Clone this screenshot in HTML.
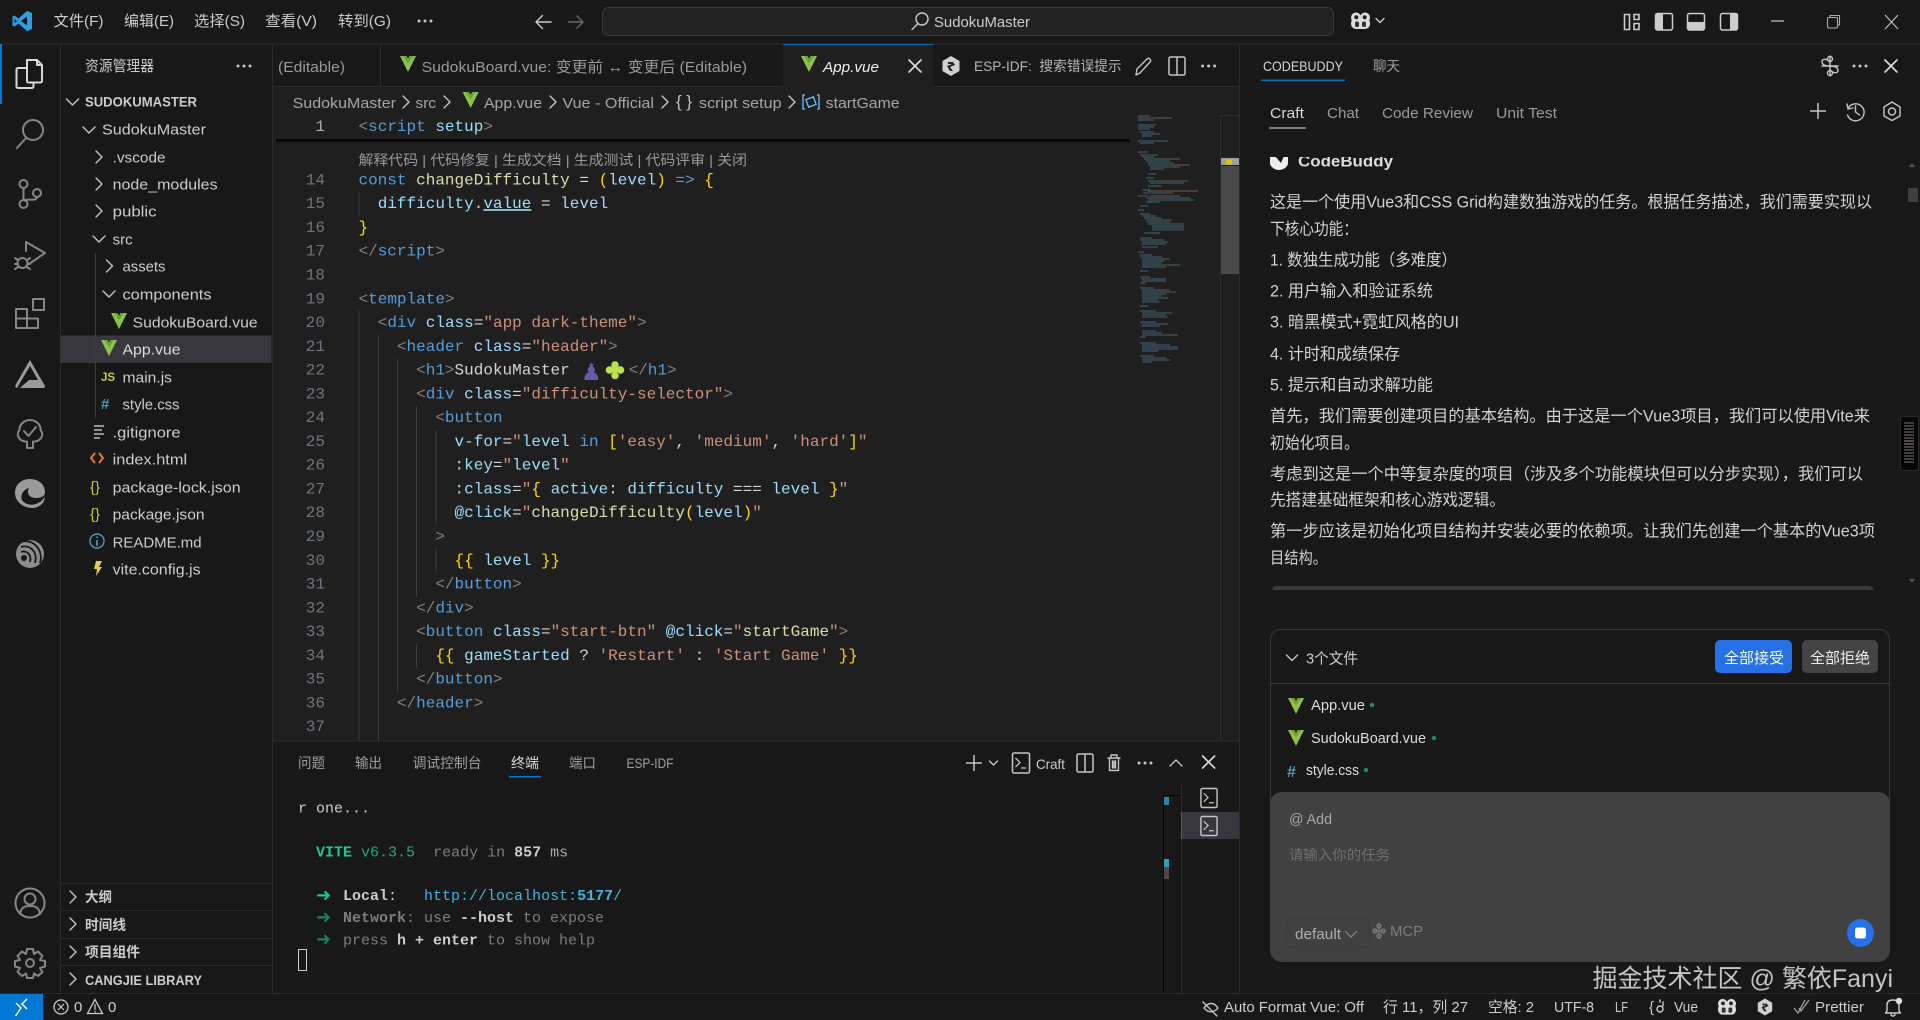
<!DOCTYPE html>
<html lang="zh"><head><meta charset="utf-8"><title>SudokuMaster</title>
<style>
html,body{margin:0;padding:0;background:#181818;overflow:hidden}
svg{display:block}
text{font-family:"Liberation Sans","Noto Sans CJK SC",sans-serif;fill:#ccc;font-size:15px;white-space:pre}
.m{font-family:"Liberation Mono","Noto Sans CJK SC",monospace;font-size:16px}
.t{font-family:"Liberation Mono","Noto Sans CJK SC",monospace;font-size:15px}
.n{font-family:"Liberation Mono",monospace;font-size:16px;fill:#6e7681;text-anchor:end}
.b{fill:#808080}.g{fill:#569cd6}.a{fill:#9cdcfe}.s{fill:#ce9178}.y{fill:#ffd700}.f{fill:#dcdcaa}.w{fill:#d4d4d4}.p{fill:#da70d6}
.i{fill:none;stroke:#868686;stroke-width:2;stroke-linecap:round;stroke-linejoin:round}
.k{fill:none;stroke:#ccc;stroke-width:1.4;stroke-linecap:round;stroke-linejoin:round}
.c{fill:none;stroke:#c5c5c5;stroke-width:1.4;stroke-linecap:round;stroke-linejoin:round}
.d{font-size:16.2px;fill:#d2d2d2}
.e{font-size:15px;fill:#ccc;transform:translateY(-.6px)}
.h{font-size:14px;font-weight:700;fill:#ccc}
.ar{font-family:"DejaVu Sans",sans-serif;font-size:18px;font-weight:700}
</style></head><body>
<svg xmlns="http://www.w3.org/2000/svg" width="1920" height="1020" viewBox="0 0 1920 1020">
<defs>
<g id="vue"><path d="M-8-8-0 8 8-8H4.600L0-1.300-4.600-8Z" fill="#8dc149"/><path d="M-4.600-8H-1.600L0-5.400 1.600-8H4.600L0-1.300Z" fill="#6aa83a"/></g>
<g id="chr"><path d="M-3-6 3 0-3 6" class="c" fill="none"/></g>
<g id="chd"><path d="M-6-3 0 3 6-3" class="c" fill="none"/></g>
<g id="term"><rect x="-8.5" y="-10" width="17" height="20" rx="1.5" fill="none" stroke="#c5c5c5" stroke-width="1.5"/><path d="M-5.5-5 -1 -.5-5.5 4M0 5H5" fill="none" stroke="#c5c5c5" stroke-width="1.3"/></g>
<g id="split"><rect x="-8" y="-9" width="16" height="18" rx="1.5" fill="none" stroke="#c5c5c5" stroke-width="1.5"/><path d="M0-9V9" stroke="#c5c5c5" stroke-width="1.5"/></g>
<g id="dots"><circle cx="-6" r="1.5" fill="#c5c5c5"/><circle r="1.5" fill="#c5c5c5"/><circle cx="6" r="1.5" fill="#c5c5c5"/></g>
<g id="x"><path d="M-6-6 6 6M6-6-6 6" fill="none" stroke="#ddd" stroke-width="1.6" stroke-linecap="round"/></g>
<g id="cop"><circle cx="-4.500" cy="-3.500" r="5" fill="#ddd"/><circle cx="4.500" cy="-3.500" r="5" fill="#ddd"/><rect x="-9.500" y="-3" width="19" height="11" rx="5" fill="#ddd"/><circle cx="-4.200" cy="-3.800" r="2" fill="#222"/><circle cx="4.200" cy="-3.800" r="2" fill="#222"/><rect x="-5.500" y="0.500" width="4" height="5.500" rx="1.500" fill="#333"/><rect x="1.500" y="0.500" width="4" height="5.500" rx="1.500" fill="#333"/></g>
<g id="hex"><path d="M0-10 8.5-5V5L0 10-8.5 5V-5Z" fill="#cfcfcf"/><path d="M-3-4H2L4-1-1 1 2 5H-1L-4 0 1-2-3-2Z" fill="#222"/></g>
<clipPath id="cb"><rect x="1262" y="157" width="300" height="20"/></clipPath>
</defs>

<!-- surfaces -->
<rect width="1920" height="1020" fill="#181818"/>
<rect x="272" y="87" width="967" height="654" fill="#1f1f1f"/>
<rect x="0" y="43.5" width="1920" height="1" fill="#2b2b2b"/>
<rect x="60" y="44" width="1" height="949" fill="#2b2b2b"/>
<rect x="272" y="44" width="1" height="949" fill="#2b2b2b"/>
<rect x="1239" y="44" width="1" height="949" fill="#2b2b2b"/>
<rect x="273" y="86" width="966" height="1" fill="#2b2b2b"/>
<rect x="273" y="740.5" width="966" height="1" fill="#2b2b2b"/>
<rect y="993" width="1920" height="1" fill="#2b2b2b"/>

<!-- title bar -->
<path d="M27 11 18.500 18.500 14.500 15.500 12.500 16.400V25.600L14.500 26.500 18.500 23.500 27 31 32 29V13ZM27 16.500V25.500L21 21ZM14.500 18.800 17 21 14.500 23.200Z" fill="#2d9fe8"/>
<text x="53.500" y="26" textLength="50" lengthAdjust="spacingAndGlyphs" font-size="14.500">文件(F)</text>
<text x="124" y="26" textLength="50" lengthAdjust="spacingAndGlyphs">编辑(E)</text>
<text x="194" y="26" textLength="51" lengthAdjust="spacingAndGlyphs">选择(S)</text>
<text x="265" y="26" textLength="52" lengthAdjust="spacingAndGlyphs">查看(V)</text>
<text x="338" y="26" textLength="53" lengthAdjust="spacingAndGlyphs">转到(G)</text>
<use href="#dots" x="425" y="21"/>
<path d="M551 22H536M542.500 15.500 536 22 542.500 28.500" class="k"/>
<path d="M568 22H583M576.500 15.500 583 22 576.500 28.500" fill="none" stroke="#6a6a6a" stroke-width="1.400"/>
<rect x="602.500" y="7.500" width="731" height="28" rx="6" fill="#222" stroke="#3a3a3a"/>
<circle cx="922" cy="19" r="6" class="k"/><path d="M917.500 24 912 29.500" class="k"/>
<text x="934" y="27" textLength="96" lengthAdjust="spacingAndGlyphs">SudokuMaster</text>
<use href="#cop" x="1360.500" y="21"/>
<path d="M1376 18.500 1380 22.500 1384 18.500" class="k" stroke-width="1.100"/>
<path d="M1624.500 14.500h5v15h-5zM1634 14.500h5v5h-5zM1634 23.500h5v6h-5z" fill="none" stroke="#ccc" stroke-width="1.600"/>
<rect x="1655.500" y="13.500" width="17" height="16.500" rx="2" fill="none" stroke="#ccc" stroke-width="1.500"/><path d="M1655.500 15.500a2 2 0 0 1 2-2H1663V30h-5.500a2 2 0 0 1-2-2z" fill="#ccc"/>
<rect x="1687.500" y="13.500" width="17" height="16.500" rx="2" fill="none" stroke="#ccc" stroke-width="1.500"/><path d="M1687.500 22H1704.500V28a2 2 0 0 1-2 2H1689.500a2 2 0 0 1-2-2z" fill="#ccc"/>
<rect x="1720.500" y="13.500" width="17" height="16.500" rx="2" fill="none" stroke="#ccc" stroke-width="1.500"/><path d="M1737.500 15.500a2 2 0 0 0-2-2H1730V30h5.500a2 2 0 0 0 2-2z" fill="#ccc"/>
<path d="M1771 21H1784" stroke="#ccc" stroke-width="1.200"/>
<rect x="1827.500" y="17.500" width="10" height="10.500" rx="1.500" fill="none" stroke="#aaa" stroke-width="1.100"/><path d="M1830 17V15.500H1839.500V25H1837.500" fill="none" stroke="#aaa" stroke-width="1.100"/>
<path d="M1885 15 1898 29M1898 15 1885 29" stroke="#ccc" stroke-width="1"/>

<!-- activity bar -->
<rect x="0" y="44" width="2" height="60" fill="#0078d4"/>
<g fill="none" stroke="#d7d7d7" stroke-width="2" stroke-linejoin="round"><path d="M27 60H37L42 65V81A1.500 1.500 0 0 1 40.500 82.500H28.500A1.500 1.500 0 0 1 27 81ZM37 60V65H42"/><path d="M27 68H18A1.500 1.500 0 0 0 16.500 69.500V86.500A1.500 1.500 0 0 0 18 88H32A1.500 1.500 0 0 0 33.500 86.500V82.500"/></g>
<g class="i"><circle cx="33" cy="130" r="10"/><path d="M26 138 17 148"/></g>
<g class="i"><circle cx="23.500" cy="184" r="4"/><circle cx="23.500" cy="204" r="4"/><circle cx="37" cy="193" r="4"/><path d="M23.500 188V200M37 197C37 202 27 198 24.500 200.500"/></g>
<g class="i"><path d="M26 242 45 253 29 264M26 242V251"/><circle cx="22.500" cy="263" r="5"/><path d="M15 258 18 260M15 264H18M15 269 18 267M30 258 27 260M30 264H27M30 269 27 267"/></g>
<g class="i"><path d="M16 309H27V328H16ZM16 318.500H38V328H27M27 318.500V309"/><rect x="33" y="299" width="11" height="11"/></g>
<path d="M30 360 45 386C45 388 44 388 42 388H20L29 380H38L30 366 17 388C15 388 15 386 16 384Z" fill="#9a9a9a"/>
<g class="i"><path d="M30 420C36 420 41 425 40.500 430 43 433 43 437 39 440 36 442 33 441.500 33 441.500V448H27V441.500C27 441.500 24 442 21 440 17 437 17 433 19.500 430 19 425 24 420 30 420Z"/><path d="M24 431 28.500 436 36 427"/></g>
<path d="M45 496C45 504 38 508 32 508 24 508 15 502 15 493 15 484 22 479 30 479 39 479 45 485 45 492 45 497 40 498 36 498 30 498 26 494 29 488 23 490 20 495 22 500 25 505 33 506 38 503 41 502 44 499 45 496Z" fill="#9a9a9a"/>
<circle cx="30" cy="554" r="14" fill="#8d8d8d"/><g fill="none" stroke="#181818" stroke-width="1.800"><path d="M21 547C30 544 38 552 35 563"/><path d="M21 542C33 538 44 550 40 563"/><path d="M21 552C27 550 32 555 30 562"/></g><circle cx="24" cy="558" r="3" fill="#181818"/>
<g class="i"><circle cx="30" cy="903" r="14.500"/><circle cx="30" cy="899" r="5.500"/><path d="M20 914C21 907 25 906 30 906S39 907 40 914"/></g>
<g class="i"><circle cx="30" cy="963" r="4"/><path d="M27 949H33L34 954 38 951.500 42.500 956 40 960 45 961V966.500L40 968 42.500 972 38 976 34 973.500 33 978H27L26 973.500 22 976 17.500 972 20 968 15 966.500V961L20 960 17.500 956 22 951.500 26 954Z"/></g>

<!-- explorer -->
<text x="85" y="71" textLength="69" lengthAdjust="spacingAndGlyphs" font-size="14">资源管理器</text>
<use href="#dots" x="244" y="66"/>
<use href="#chd" x="72.500" y="102"/>
<text class="h" x="85" y="106.500" textLength="112" lengthAdjust="spacingAndGlyphs">SUDOKUMASTER</text>
<use href="#chd" x="89" y="130"/>
<text class="e" x="102" y="135" textLength="104" lengthAdjust="spacingAndGlyphs">SudokuMaster</text>
<use href="#chr" x="99" y="157"/><text class="e" x="112.600" y="163" textLength="53" lengthAdjust="spacingAndGlyphs">.vscode</text>
<use href="#chr" x="99" y="184"/><text class="e" x="112.600" y="190" textLength="105" lengthAdjust="spacingAndGlyphs">node_modules</text>
<use href="#chr" x="99" y="211"/><text class="e" x="112.600" y="217" textLength="44" lengthAdjust="spacingAndGlyphs">public</text>
<use href="#chd" x="99" y="239"/><text class="e" x="112.600" y="245" textLength="20" lengthAdjust="spacingAndGlyphs">src</text>
<use href="#chr" x="109.500" y="266"/><text class="e" x="122.500" y="272" textLength="43" lengthAdjust="spacingAndGlyphs">assets</text>
<use href="#chd" x="109" y="294"/><text class="e" x="122.500" y="300" textLength="89" lengthAdjust="spacingAndGlyphs">components</text>
<use href="#vue" x="119" y="321"/><text class="e" x="132.600" y="328" textLength="125" lengthAdjust="spacingAndGlyphs">SudokuBoard.vue</text>
<rect x="60.500" y="335.500" width="211" height="27.500" fill="#37373d"/>
<rect x="95" y="253" width="1" height="165" fill="#3c3c3c"/>
<use href="#vue" x="109" y="348"/><text class="e" x="122.500" y="355" textLength="58" lengthAdjust="spacingAndGlyphs" style="fill:#ddd">App.vue</text>
<text x="101" y="381" style="font-size:11.500px;font-weight:700;fill:#cbcb41">JS</text><text class="e" x="122.500" y="383" textLength="49.500" lengthAdjust="spacingAndGlyphs">main.js</text>
<text x="101" y="409" style="font-size:15px;font-weight:700;fill:#519aba">#</text><text class="e" x="122.500" y="410" textLength="57" lengthAdjust="spacingAndGlyphs">style.css</text>
<path d="M94 426H104M94 430H102M94 434H104M94 438H100" stroke="#bbb" stroke-width="1.500"/><text class="e" x="112.600" y="438" textLength="68" lengthAdjust="spacingAndGlyphs">.gitignore</text>
<path d="M95 453 91 458 95 463M99 453 103 458 99 463" fill="none" stroke="#e37933" stroke-width="2"/><text class="e" x="112.600" y="465" textLength="74.500" lengthAdjust="spacingAndGlyphs">index.html</text>
<text x="90" y="492" style="font-size:15px;fill:#cbcb41">{}</text><text class="e" x="112.600" y="493" textLength="128" lengthAdjust="spacingAndGlyphs">package-lock.json</text>
<text x="90" y="519" style="font-size:15px;fill:#cbcb41">{}</text><text class="e" x="112.600" y="520" textLength="92" lengthAdjust="spacingAndGlyphs">package.json</text>
<circle cx="97" cy="541" r="7" fill="none" stroke="#519aba" stroke-width="1.400"/><path d="M97 540V546M97 536.500V538" stroke="#519aba" stroke-width="1.600"/><text class="e" x="112.600" y="548" textLength="89" lengthAdjust="spacingAndGlyphs">README.md</text>
<path d="M96 561H102L99 567H102L96 576 97 569H94Z" fill="#e5d04a"/><text class="e" x="112.600" y="575" textLength="88" lengthAdjust="spacingAndGlyphs">vite.config.js</text>

<rect x="61" y="883" width="211" height="1" fill="#2b2b2b"/><rect x="61" y="910" width="211" height="1" fill="#2b2b2b"/><rect x="61" y="938" width="211" height="1" fill="#2b2b2b"/><rect x="61" y="965" width="211" height="1" fill="#2b2b2b"/>
<use href="#chr" x="73" y="897"/><text class="h" x="85" y="902" textLength="27" lengthAdjust="spacingAndGlyphs">大纲</text>
<use href="#chr" x="73" y="924"/><text class="h" x="85" y="930" textLength="41" lengthAdjust="spacingAndGlyphs">时间线</text>
<use href="#chr" x="73" y="952"/><text class="h" x="85" y="957" textLength="55" lengthAdjust="spacingAndGlyphs">项目组件</text>
<use href="#chr" x="73" y="979"/><text class="h" x="85" y="985" textLength="117" lengthAdjust="spacingAndGlyphs">CANGJIE LIBRARY</text>

<!-- editor tabs -->
<rect x="380" y="44" width="1" height="42" fill="#2b2b2b"/>
<text x="278" y="72" textLength="67" lengthAdjust="spacingAndGlyphs" style="fill:#9a9a9a">(Editable)</text>
<use href="#vue" x="408" y="64"/>
<text x="421.600" y="72" textLength="325.400" lengthAdjust="spacingAndGlyphs" style="fill:#9a9a9a">SudokuBoard.vue: 变更前 ↔ 变更后 (Editable)</text>
<rect x="783" y="44" width="150" height="43" fill="#1f1f1f"/>
<rect x="783" y="44" width="150" height="1" fill="#0a6cb0"/>
<use href="#vue" x="809" y="64"/>
<text x="823" y="72" textLength="56" lengthAdjust="spacingAndGlyphs" style="font-style:italic;fill:#eee">App.vue</text>
<use href="#x" x="915" y="66"/>
<use href="#hex" x="951" y="66"/>
<text x="974" y="71" textLength="147.600" lengthAdjust="spacingAndGlyphs" style="font-size:14px;fill:#b5b5b5">ESP-IDF:  搜索错误提示</text>
<path d="M1136 75 1137 69 1147 59C1149 57 1152 60 1150 62L1140 73Z" class="c"/>
<use href="#split" x="1177" y="66"/>
<use href="#dots" x="1208.600" y="66"/>

<!-- breadcrumbs -->
<g style="fill:#a5a5a5">
<text x="292.600" y="108" textLength="103.400" lengthAdjust="spacingAndGlyphs" style="fill:#a5a5a5">SudokuMaster</text>
<text x="415.500" y="108" textLength="20.500" lengthAdjust="spacingAndGlyphs" style="fill:#a5a5a5">src</text>
<text x="484" y="108" textLength="58" lengthAdjust="spacingAndGlyphs" style="fill:#a5a5a5">App.vue</text>
<text x="562.400" y="108" textLength="91.600" lengthAdjust="spacingAndGlyphs" style="fill:#a5a5a5">Vue - Official</text>
<text x="699" y="108" textLength="82.600" lengthAdjust="spacingAndGlyphs" style="fill:#a5a5a5">script setup</text>
<text x="825.700" y="108" textLength="73.900" lengthAdjust="spacingAndGlyphs" style="fill:#a5a5a5">startGame</text>
</g>
<use href="#chr" x="406" y="102"/><use href="#chr" x="447" y="102"/><use href="#chr" x="553" y="102"/><use href="#chr" x="665" y="102"/><use href="#chr" x="792" y="102"/>
<use href="#vue" x="470.600" y="100"/>
<text x="676" y="107" style="font-size:17px;fill:#c5c5c5">{ }</text>
<path d="M805 95H803V109H805M817 95H819V109H817" fill="none" stroke="#75beff" stroke-width="1.300"/><rect x="807" y="98" width="8" height="8" fill="none" stroke="#75beff" stroke-width="1.300" transform="rotate(-20 811 102)"/>

<!-- indent guides -->
<g fill="#3e3e3e">
<rect x="358.500" y="192" width="1" height="24"/><rect x="358.500" y="311" width="1" height="430"/>
<rect x="378" y="335" width="1" height="406"/>
<rect x="397" y="359" width="1" height="333"/>
<rect x="416" y="406" width="1" height="191"/><rect x="416" y="644" width="1" height="24"/>
<rect x="435.500" y="430" width="1" height="95"/><rect x="435.500" y="549" width="1" height="24"/>
</g>

<!-- sticky line + code -->
<g transform="translate(0,-1)">
<text class="n" x="325" y="132" style="fill:#aaa">1</text>
<text class="m" x="358.500" y="132"><tspan class="b">&lt;</tspan><tspan class="g">script</tspan> <tspan class="a">setup</tspan><tspan class="b">&gt;</tspan></text>
<text class="n" x="325" y="185.400">14</text>
<text class="m" x="358.500" y="185.400"><tspan class="g">const</tspan> <tspan class="f">changeDifficulty</tspan> <tspan class="w">=</tspan> <tspan class="y">(</tspan><tspan class="a">level</tspan><tspan class="y">)</tspan> <tspan class="g">=&gt;</tspan> <tspan class="y">{</tspan></text>
<text class="n" x="325" y="209.200">15</text>
<text class="m" x="358.500" y="209.200">  <tspan class="a">difficulty</tspan><tspan class="w">.</tspan><tspan class="a" text-decoration="underline">value</tspan> <tspan class="w">=</tspan> <tspan class="a">level</tspan></text>
<text class="n" x="325" y="232.900">16</text>
<text class="m y" x="358.500" y="232.900">}</text>
<text class="n" x="325" y="256.700">17</text>
<text class="m" x="358.500" y="256.700"><tspan class="b">&lt;/</tspan><tspan class="g">script</tspan><tspan class="b">&gt;</tspan></text>
<text class="n" x="325" y="280.500">18</text>
<text class="n" x="325" y="304.300">19</text>
<text class="m" x="358.500" y="304.300"><tspan class="b">&lt;</tspan><tspan class="g">template</tspan><tspan class="b">&gt;</tspan></text>
<text class="n" x="325" y="328">20</text>
<text class="m" x="358.500" y="328">  <tspan class="b">&lt;</tspan><tspan class="g">div</tspan> <tspan class="a">class</tspan><tspan class="w">=</tspan><tspan class="s">"app dark-theme"</tspan><tspan class="b">&gt;</tspan></text>
<text class="n" x="325" y="351.800">21</text>
<text class="m" x="358.500" y="351.800">    <tspan class="b">&lt;</tspan><tspan class="g">header</tspan> <tspan class="a">class</tspan><tspan class="w">=</tspan><tspan class="s">"header"</tspan><tspan class="b">&gt;</tspan></text>
<text class="n" x="325" y="375.600">22</text>
<text class="m" x="358.500" y="375.600">      <tspan class="b">&lt;</tspan><tspan class="g">h1</tspan><tspan class="b">&gt;</tspan><tspan class="w">SudokuMaster</tspan></text>
<text x="581" y="381" style="font-family:'DejaVu Sans',sans-serif;font-size:23px;fill:#6a5aa8">♟</text>
<g fill="#b9e24a"><circle cx="615" cy="366" r="3.800"/><circle cx="615" cy="376.500" r="3.800"/><circle cx="609.500" cy="371" r="3.800"/><circle cx="620.500" cy="371" r="3.800"/><circle cx="615" cy="371" r="3"/></g>
<text class="m" x="628.600" y="375.600"><tspan class="b">&lt;/</tspan><tspan class="g">h1</tspan><tspan class="b">&gt;</tspan></text>
<text class="n" x="325" y="399.300">23</text>
<text class="m" x="358.500" y="399.300">      <tspan class="b">&lt;</tspan><tspan class="g">div</tspan> <tspan class="a">class</tspan><tspan class="w">=</tspan><tspan class="s">"difficulty-selector"</tspan><tspan class="b">&gt;</tspan></text>
<text class="n" x="325" y="423.100">24</text>
<text class="m" x="358.500" y="423.100">        <tspan class="b">&lt;</tspan><tspan class="g">button</tspan></text>
<text class="n" x="325" y="446.900">25</text>
<text class="m" x="358.500" y="446.900">          <tspan class="a">v-for</tspan><tspan class="w">=</tspan><tspan class="s">"</tspan><tspan class="a">level</tspan> <tspan class="g">in</tspan> <tspan class="y">[</tspan><tspan class="s">'easy'</tspan><tspan class="w">,</tspan> <tspan class="s">'medium'</tspan><tspan class="w">,</tspan> <tspan class="s">'hard'</tspan><tspan class="y">]</tspan><tspan class="s">"</tspan></text>
<text class="n" x="325" y="470.700">26</text>
<text class="m" x="358.500" y="470.700">          <tspan class="a">:key</tspan><tspan class="w">=</tspan><tspan class="s">"</tspan><tspan class="a">level</tspan><tspan class="s">"</tspan></text>
<text class="n" x="325" y="494.400">27</text>
<text class="m" x="358.500" y="494.400">          <tspan class="a">:class</tspan><tspan class="w">=</tspan><tspan class="s">"</tspan><tspan class="y">{</tspan> <tspan class="a">active</tspan><tspan class="w">:</tspan> <tspan class="a">difficulty</tspan> <tspan class="w">===</tspan> <tspan class="a">level</tspan> <tspan class="y">}</tspan><tspan class="s">"</tspan></text>
<text class="n" x="325" y="518.200">28</text>
<text class="m" x="358.500" y="518.200">          <tspan class="a">@click</tspan><tspan class="w">=</tspan><tspan class="s">"</tspan><tspan class="f">changeDifficulty</tspan><tspan class="y">(</tspan><tspan class="a">level</tspan><tspan class="y">)</tspan><tspan class="s">"</tspan></text>
<text class="n" x="325" y="542">29</text>
<text class="m b" x="358.500" y="542">        &gt;</text>
<text class="n" x="325" y="565.800">30</text>
<text class="m" x="358.500" y="565.800">          <tspan class="y">{{</tspan> <tspan class="a">level</tspan> <tspan class="y">}}</tspan></text>
<text class="n" x="325" y="589.500">31</text>
<text class="m" x="358.500" y="589.500">        <tspan class="b">&lt;/</tspan><tspan class="g">button</tspan><tspan class="b">&gt;</tspan></text>
<text class="n" x="325" y="613.300">32</text>
<text class="m" x="358.500" y="613.300">      <tspan class="b">&lt;/</tspan><tspan class="g">div</tspan><tspan class="b">&gt;</tspan></text>
<text class="n" x="325" y="637.100">33</text>
<text class="m" x="358.500" y="637.100">      <tspan class="b">&lt;</tspan><tspan class="g">button</tspan> <tspan class="a">class</tspan><tspan class="w">=</tspan><tspan class="s">"start-btn"</tspan> <tspan class="a">@click</tspan><tspan class="w">=</tspan><tspan class="s">"</tspan><tspan class="f">startGame</tspan><tspan class="s">"</tspan><tspan class="b">&gt;</tspan></text>
<text class="n" x="325" y="660.800">34</text>
<text class="m" x="358.500" y="660.800">        <tspan class="y">{{</tspan> <tspan class="a">gameStarted</tspan> <tspan class="w">?</tspan> <tspan class="s">'Restart'</tspan> <tspan class="w">:</tspan> <tspan class="s">'Start Game'</tspan> <tspan class="y">}}</tspan></text>
<text class="n" x="325" y="684.600">35</text>
<text class="m" x="358.500" y="684.600">      <tspan class="b">&lt;/</tspan><tspan class="g">button</tspan><tspan class="b">&gt;</tspan></text>
<text class="n" x="325" y="708.400">36</text>
<text class="m" x="358.500" y="708.400">    <tspan class="b">&lt;/</tspan><tspan class="g">header</tspan><tspan class="b">&gt;</tspan></text>
<text class="n" x="325" y="732.200">37</text>
</g>
<rect x="276" y="139" width="854" height="2.500" fill="#050505"/>
<rect x="276" y="141.500" width="854" height="2" fill="#141414"/>
<text x="358.500" y="165" textLength="388.500" lengthAdjust="spacingAndGlyphs" style="font-size:14px;fill:#999">解释代码 | 代码修复 | 生成文档 | 生成测试 | 代码评审 | 关闭</text>

<!-- minimap -->
<g fill="none" stroke-width=".9" opacity=".6">
<path stroke="#5d8ca8" d="M1138 116h12M1138 118h24M1138 120h16M1138 125h18M1138 127h16M1138 129h12M1140 132h14M1142 134h18M1142 136h10M1138 141h30M1140 143h14M1138 152h10M1140 155h18M1142 157h12M1144 159h24M1146 161h24M1148 163h26M1148 165h34M1150 167h30M1150 169h14M1148 174h8M1146 178h8M1148 181h40M1150 183h34M1148 186h14M1142 190h8M1138 196h10"/>
<path stroke="#a9806a" d="M1150 118h22M1164 159h16M1170 165h20M1160 181h24M1148 191h50M1150 196h30"/>
<path stroke="#5d8ca8" d="M1143 193h30M1146 198h44M1148 200h46M1146 202h14M1140 206h8M1138 210h6M1140 214h10M1142 216h14M1144 218h18M1146 220h26M1146 222h24M1148 224h36M1152 226h32M1152 228h32M1152 230h32M1144 233h16M1140 238h12M1140 240h24M1142 242h26M1142 244h24M1142 247h16M1138 252h6M1140 255h12M1140 257h22M1142 259h28M1142 261h22M1142 263h20M1142 265h38M1142 267h24M1140 271h8M1140 277h10M1142 279h24M1142 281h24M1140 283h6M1140 288h14M1142 290h28M1142 292h34M1142 294h24M1142 296h20M1142 298h26M1142 300h16M1142 302h18M1140 306h8M1140 311h16M1142 313h30M1142 315h24M1142 317h26M1140 322h16M1142 324h26M1142 326h18M1142 331h14M1142 333h20M1142 335h36M1140 337h6M1140 343h16M1142 345h28M1142 347h36M1142 349h36M1142 351h16M1140 356h14M1142 358h24M1142 360h28M1142 362h10"/>
</g>

<!-- scrollbar -->
<rect x="1220" y="115" width="1" height="626" fill="#2e2e2e"/>
<rect x="1220" y="115" width="19" height="1" fill="#2e2e2e"/>
<rect x="1221" y="158" width="18" height="7" fill="#d4d4d4" opacity=".7"/>
<rect x="1226" y="159.500" width="6" height="5" fill="#e6c200"/>
<rect x="1221" y="166" width="18" height="108" fill="#4a4a4a"/>

<!-- bottom panel -->
<rect x="273" y="741" width="966" height="252" fill="#181818"/>
<rect x="273" y="740.500" width="966" height="1" fill="#2e2e2e"/>
<text x="298" y="768" textLength="27" lengthAdjust="spacingAndGlyphs" style="font-size:14px;fill:#a0a0a0">问题</text>
<text x="355" y="768" textLength="27" lengthAdjust="spacingAndGlyphs" style="font-size:14px;fill:#a0a0a0">输出</text>
<text x="412.600" y="768" textLength="69" lengthAdjust="spacingAndGlyphs" style="font-size:14px;fill:#a0a0a0">调试控制台</text>
<text x="511" y="768" textLength="28" lengthAdjust="spacingAndGlyphs" style="font-size:14px;fill:#ddd">终端</text>
<rect x="509" y="776" width="32" height="1.500" fill="#0078d4"/>
<text x="569" y="768" textLength="27" lengthAdjust="spacingAndGlyphs" style="font-size:14px;fill:#a0a0a0">端口</text>
<text x="626.500" y="768" textLength="47" lengthAdjust="spacingAndGlyphs" style="font-size:14px;fill:#a0a0a0">ESP-IDF</text>
<path d="M966 763H982M974 755V771" stroke="#c5c5c5" stroke-width="1.500"/>
<path d="M989.500 761 993.500 765 997.500 761" class="c"/>
<use href="#term" x="1021" y="763"/>
<text x="1036" y="769" textLength="29" lengthAdjust="spacingAndGlyphs" style="font-size:14px">Craft</text>
<use href="#split" x="1085" y="763"/>
<path d="M1108 758H1120M1111 758V755H1117V758M1109.500 758V770.500H1118.500V758M1112.500 761V768M1114 761V768M1115.500 761V768" class="c" stroke-width="1.200"/>
<use href="#dots" x="1145" y="763"/>
<path d="M1170 766 1176 760 1182 766" class="c"/>
<use href="#x" x="1208.600" y="762"/>

<rect x="1181" y="785" width="1" height="208" fill="#2b2b2b"/>
<rect x="1181" y="812" width="58" height="27" fill="#37373d"/><rect x="1181" y="812" width="1" height="27" fill="#0078d4"/>
<use href="#term" transform="translate(1209 798) scale(.95)"/>
<use href="#term" transform="translate(1209 826) scale(.95)"/>
<rect x="1163" y="795" width="18" height="198" fill="#181818"/>
<rect x="1163" y="795" width="1" height="197" fill="#050505"/><rect x="1163" y="795" width="18" height="1" fill="#050505"/>
<rect x="1164" y="797" width="5" height="8" fill="#2a85ad"/><rect x="1164" y="859" width="5" height="8" fill="#2f9fb5"/><rect x="1164" y="867" width="5" height="12" fill="#4a4a4a"/>

<text class="t" x="298" y="812.500">r one...</text>
<text class="t" x="316" y="856.500"><tspan style="fill:#23c48e;font-weight:700">VITE</tspan> <tspan style="fill:#23a87c">v6.3.5</tspan>  <tspan style="fill:#7d7d7d">ready in</tspan> <tspan style="font-weight:700;fill:#ccc">857</tspan> <tspan style="fill:#aaa">ms</tspan></text>
<text class="ar" x="316" y="901" style="fill:#23c48e">➜</text>
<text class="t" x="343" y="900"><tspan style="font-weight:700;fill:#ccc">Local</tspan><tspan style="fill:#ccc">:</tspan>   <tspan style="fill:#3fb3e0">http://localhost:</tspan><tspan style="fill:#3fb3e0;font-weight:700">5177</tspan><tspan style="fill:#3fb3e0">/</tspan></text>
<text class="ar" x="316" y="923" style="fill:#1e7e5e">➜</text>
<text class="t" x="343" y="922"><tspan style="font-weight:700;fill:#7d7d7d">Network</tspan><tspan style="fill:#7d7d7d">: use </tspan><tspan style="font-weight:700;fill:#ccc">--host</tspan><tspan style="fill:#7d7d7d"> to expose</tspan></text>
<text class="ar" x="316" y="945" style="fill:#1e7e5e">➜</text>
<text class="t" x="343" y="944.500"><tspan style="fill:#7d7d7d">press </tspan><tspan style="font-weight:700;fill:#ccc">h + enter</tspan><tspan style="fill:#7d7d7d"> to show help</tspan></text>
<rect x="298.500" y="949.500" width="8" height="21" fill="none" stroke="#ccc" stroke-width="1"/>

<!-- right panel header -->
<text x="1263" y="71" textLength="80" lengthAdjust="spacingAndGlyphs" style="font-size:14px;fill:#d5d5d5">CODEBUDDY</text>
<rect x="1261" y="79.500" width="84" height="1.500" fill="#0a6cb0"/>
<text x="1373" y="71" textLength="27" lengthAdjust="spacingAndGlyphs" style="font-size:14px;fill:#a0a0a0">聊天</text>
<g class="c" fill="none"><path d="M1830 56V76M1822 66H1838"/><path d="M1830 66C1824 66 1822 64 1822 61.500S1826 58 1830 62M1830 66C1836 66 1838 68 1838 70.500S1834 74 1830 70"/><circle cx="1830" cy="59" r="2.500"/><circle cx="1830" cy="73" r="2.500"/></g>
<use href="#dots" x="1860" y="66"/>
<use href="#x" x="1891" y="66"/>
<text x="1270" y="118" textLength="34" lengthAdjust="spacingAndGlyphs" style="fill:#d5d5d5">Craft</text>
<rect x="1269" y="127.500" width="37" height="1" fill="#ddd"/>
<text x="1327" y="118" textLength="32" lengthAdjust="spacingAndGlyphs" style="fill:#9a9a9a">Chat</text>
<text x="1382" y="118" textLength="91" lengthAdjust="spacingAndGlyphs" style="fill:#9a9a9a">Code Review</text>
<text x="1496" y="118" textLength="61" lengthAdjust="spacingAndGlyphs" style="fill:#9a9a9a">Unit Test</text>
<path d="M1810 111H1826M1818 103V119" stroke="#c5c5c5" stroke-width="1.500"/>
<path d="M1847 104 1848 109 1853 108M1848 108.500A8.500 8.500 0 1 1 1847.500 115M1855.500 106V112L1859.500 115" class="c"/>
<path d="M1892 102 1900 107V116L1892 120.500 1884 116V107Z" class="c"/><circle cx="1892" cy="111.500" r="3.500" class="c"/>

<!-- chat -->
<g clip-path="url(#cb)"><path d="M1270 156H1288V163C1288 167 1283 170 1279 170 1275 170 1270 167 1270 163Z" fill="#eee"/><path d="M1275 156 1281 163 1284 156Z" fill="#181818"/>
<text x="1298" y="166.500" textLength="95" lengthAdjust="spacingAndGlyphs" style="font-weight:700;font-size:16px;fill:#ddd">CodeBuddy</text></g>
<text class="d" x="1270" y="207.500" textLength="602" lengthAdjust="spacingAndGlyphs">这是一个使用Vue3和CSS Grid构建数独游戏的任务。根据任务描述，我们需要实现以</text>
<text class="d" x="1270" y="234.500" textLength="88" lengthAdjust="spacingAndGlyphs">下核心功能：</text>
<text class="d" x="1270" y="265.500" textLength="187" lengthAdjust="spacingAndGlyphs">1. 数独生成功能（多难度）</text>
<text class="d" x="1270" y="296.500" textLength="163" lengthAdjust="spacingAndGlyphs">2. 用户输入和验证系统</text>
<text class="d" x="1270" y="327.500" textLength="189" lengthAdjust="spacingAndGlyphs">3. 暗黑模式+霓虹风格的UI</text>
<text class="d" x="1270" y="359.500" textLength="130" lengthAdjust="spacingAndGlyphs">4. 计时和成绩保存</text>
<text class="d" x="1270" y="390.500" textLength="163" lengthAdjust="spacingAndGlyphs">5. 提示和自动求解功能</text>
<text class="d" x="1270" y="421.500" textLength="600" lengthAdjust="spacingAndGlyphs">首先，我们需要创建项目的基本结构。由于这是一个Vue3项目，我们可以使用Vite来</text>
<text class="d" x="1270" y="448.500" textLength="89" lengthAdjust="spacingAndGlyphs">初始化项目。</text>
<text class="d" x="1270" y="479.500" textLength="593" lengthAdjust="spacingAndGlyphs">考虑到这是一个中等复杂度的项目（涉及多个功能模块但可以分步实现），我们可以</text>
<text class="d" x="1270" y="505.500" textLength="235" lengthAdjust="spacingAndGlyphs">先搭建基础框架和核心游戏逻辑。</text>
<text class="d" x="1270" y="536.500" textLength="605" lengthAdjust="spacingAndGlyphs">第一步应该是初始化项目结构并安装必要的依赖项。让我们先创建一个基本的Vue3项</text>
<text class="d" x="1270" y="563.500" textLength="57" lengthAdjust="spacingAndGlyphs">目结构。</text>
<path d="M1272 590C1273 587 1275 586 1278 586H1868C1871 586 1873 587 1874 590Z" fill="#3a3a3a"/>
<!-- chat scrollbar -->
<path d="M1912 163 1915 167H1909Z" fill="#555"/><path d="M1912 583 1915 579H1909Z" fill="#555"/>
<rect x="1908" y="188" width="10" height="14" fill="#3f3f3f"/>
<rect x="1900.500" y="416.500" width="18" height="54" rx="2" fill="#050505" stroke="#2a2a2a"/>
<path d="M1904 423H1914M1904 426H1914M1904 429H1914M1904 432H1914M1904 435H1914M1904 438H1914M1904 447H1914M1904 450H1914M1904 453H1914M1904 456H1914M1904 459H1914M1904 462H1914" stroke="#777" stroke-width="1"/>
<path d="M1904 441H1914M1904 444H1914" stroke="#a88" stroke-width="1"/>

<!-- files card -->
<rect x="1270.500" y="629.500" width="619" height="200" rx="10" fill="#181818" stroke="#3a3a3a"/>
<rect x="1271" y="683" width="618" height="1" fill="#3a3a3a"/>
<path d="M1286.500 655 1292 660.500 1297.500 655" class="c"/>
<text x="1306" y="663.500" textLength="52" lengthAdjust="spacingAndGlyphs" style="fill:#ccc">3个文件</text>
<rect x="1715" y="640" width="77" height="33" rx="5" fill="#2670e8"/>
<text x="1724" y="663" textLength="60" lengthAdjust="spacingAndGlyphs" style="font-size:15px;fill:#fff">全部接受</text>
<rect x="1802" y="640" width="76" height="33" rx="5" fill="#444"/>
<text x="1810" y="663" textLength="60" lengthAdjust="spacingAndGlyphs" style="font-size:15px;fill:#f0f0f0">全部拒绝</text>
<use href="#vue" x="1296" y="706"/>
<text x="1311" y="710" textLength="54" lengthAdjust="spacingAndGlyphs" style="fill:#ddd">App.vue</text><circle cx="1372" cy="705" r="2.200" fill="#1f8a5c"/>
<use href="#vue" x="1296" y="738"/>
<text x="1311" y="743" textLength="115" lengthAdjust="spacingAndGlyphs" style="fill:#ddd">SudokuBoard.vue</text><circle cx="1434" cy="738" r="2.200" fill="#1f8a5c"/>
<text x="1287" y="777" style="font-size:16px;font-weight:700;fill:#519aba">#</text>
<text x="1306" y="775" textLength="53" lengthAdjust="spacingAndGlyphs" style="fill:#ddd">style.css</text><circle cx="1366" cy="770" r="2.200" fill="#1f8a5c"/>

<!-- input box -->
<rect x="1270" y="792" width="620" height="170" rx="12" fill="#414141"/>
<text x="1289" y="824" textLength="43" lengthAdjust="spacingAndGlyphs" style="fill:#a8a8a8">@ Add</text>
<text x="1289" y="860" textLength="101" lengthAdjust="spacingAndGlyphs" style="font-size:14px;fill:#6f6f6f">请输入你的任务</text>
<rect x="1286.500" y="918.500" width="83" height="29" rx="4" fill="#414141" stroke="#3b3b3b"/>
<text x="1295" y="939" textLength="46" lengthAdjust="spacingAndGlyphs" style="fill:#b0b0b0">default</text>
<path d="M1345 931 1351 937 1357 931" fill="none" stroke="#8a8a8a" stroke-width="1.200"/>
<g fill="none" stroke="#7d7d7d" stroke-width="1.200"><path d="M1379 923V939M1373 931H1385"/><circle cx="1379" cy="926" r="2"/><circle cx="1379" cy="936" r="2"/><circle cx="1375" cy="931" r="2"/><circle cx="1383" cy="931" r="2"/></g>
<text x="1390" y="936" textLength="33" lengthAdjust="spacingAndGlyphs" style="fill:#7d7d7d">MCP</text>
<ellipse cx="1860.500" cy="933" rx="13.500" ry="14" fill="#2670e8"/>
<rect x="1855" y="927.500" width="11" height="11" rx="2.500" fill="#fff"/>

<!-- watermark -->
<text x="1592.500" y="987" textLength="300.500" lengthAdjust="spacingAndGlyphs" style="font-size:25px;fill:#c4c4c4">掘金技术社区 @ 繁依Fanyi</text>

<!-- status bar -->
<rect y="994" width="43" height="26" fill="#0078d4"/>
<path d="M15.500 1016 21 1008 16 1003M27 999 22 1004 27 1009" fill="none" stroke="#fff" stroke-width="1.500"/>
<circle cx="61" cy="1007" r="7" fill="none" stroke="#ccc" stroke-width="1.300"/><path d="M58 1004 64 1010M64 1004 58 1010" stroke="#ccc" stroke-width="1.200"/>
<text x="74" y="1012" style="font-size:15px">0</text>
<path d="M95 999.500 102.500 1013.500H87.500Z" fill="none" stroke="#ccc" stroke-width="1.300"/><path d="M95 1004V1010M95 1011V1012.500" stroke="#ccc" stroke-width="1.200"/>
<text x="108" y="1012" style="font-size:15px">0</text>
<path d="M1203 1002 1217 1016M1204 1008C1208 1002 1214 1002 1218 1008 1214 1013 1208 1013 1204 1008Z" class="c"/>
<text x="1224" y="1012" textLength="140" lengthAdjust="spacingAndGlyphs">Auto Format Vue: Off</text>
<text x="1383" y="1012" textLength="85" lengthAdjust="spacingAndGlyphs">行 11，列 27</text>
<text x="1488" y="1012" textLength="46" lengthAdjust="spacingAndGlyphs">空格: 2</text>
<text x="1554" y="1012" textLength="40" lengthAdjust="spacingAndGlyphs">UTF-8</text>
<text x="1615" y="1012" textLength="13" lengthAdjust="spacingAndGlyphs">LF</text>
<text x="1649" y="1012" style="font-size:15px">{</text><path d="M1660 1000V1002" class="k"/><path d="M1657 1009a3 3 0 1 0 6 0 3 3 0 1 0-6 0" class="k"/><path d="M1663 1002V1006" class="k"/>
<text x="1674" y="1012" textLength="24" lengthAdjust="spacingAndGlyphs">Vue</text>
<use href="#cop" transform="translate(1727 1007) scale(.95)"/>
<use href="#hex" transform="translate(1765 1007) scale(.85)"/>
<path d="M1794 1008 1798 1013 1805 1000M1799 1008 1801 1011 1809 1000" fill="none" stroke="#aaa" stroke-width="1.200"/>
<text x="1815" y="1012" textLength="49" lengthAdjust="spacingAndGlyphs">Prettier</text>
<path d="M1887 1011V1005C1887 1001 1890 1000 1893 1000 1896 1000 1899 1001 1899 1005V1011L1900.500 1013H1885.500ZM1891 1014.500C1891 1016.500 1895 1016.500 1895 1014.500" class="k"/><circle cx="1899" cy="1001" r="3.200" fill="#ddd"/>
</svg>
</body></html>
